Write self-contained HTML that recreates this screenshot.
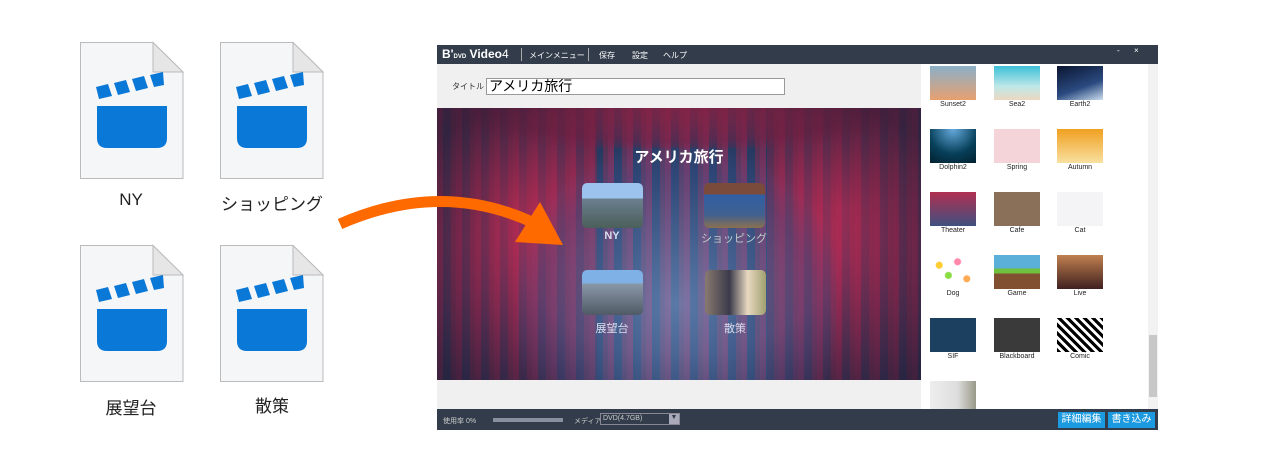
<!DOCTYPE html>
<html><head><meta charset="utf-8"><style>
*{margin:0;padding:0;box-sizing:border-box}
body{width:1274px;height:466px;background:#fff;position:relative;overflow:hidden;font-family:"Liberation Sans","Noto Sans CJK JP",sans-serif}
.abs{position:absolute}
.flabel{position:absolute;font-size:17px;color:#222;text-align:center;width:140px}
.thumb{position:absolute;width:46px;height:34px}
.tl{position:absolute;width:60px;text-align:center;font-size:7px;color:#222}
.st{position:absolute;width:61px;height:45px;border-radius:5px}
.sl{position:absolute;width:100px;text-align:center;font-size:11px;color:#dde}
</style></head><body>

<svg class="abs" style="left:0;top:0" width="340" height="466">
<defs><g id="f">
<path d="M0.5 0.5 H73 L103 30 V136.5 H0.5 Z" fill="#f5f6f8" stroke="#bbb"/>
<path d="M73 0.5 V30 H103 Z" fill="#e6e6e6" stroke="#bbb"/>
<path d="M17 64 H87 V96 Q87 106 77 106 H27 Q17 106 17 96 Z" fill="#0a78d7"/>
<path d="M16 45 L28 42 L32 54 L19 57 Z M34 41 L46 38 L50 50 L38 53 Z M52 37 L64 34 L68 46 L56 49 Z M70 33 L83 30 L84 43 L74 45 Z" fill="#0a78d7"/>
</g></defs>
<use href="#f" x="80" y="42"/><use href="#f" x="220" y="42"/>
<use href="#f" x="80" y="245"/><use href="#f" x="220" y="245"/>
</svg>
<div class="flabel" style="left:61px;top:190px">NY</div>
<div class="flabel" style="left:202px;top:190px">ショッピング</div>
<div class="flabel" style="left:61px;top:394px">展望台</div>
<div class="flabel" style="left:202px;top:392px">散策</div>

<div class="abs" style="left:437px;top:45px;width:721px;height:385px;background:#f0f0f0"></div>
<div class="abs" style="left:437px;top:45px;width:721px;height:19px;background:#323c4a;color:#fff;font-size:8px">
 <span class="abs" style="left:5px;top:2px;font-size:12px;font-weight:bold">B'<span style="font-size:6px">DVD</span> Video<span style="font-weight:normal">4</span></span>
 <span class="abs" style="left:84px;top:3px;width:1px;height:13px;background:#aaa"></span>
 <span class="abs" style="left:92px;top:5px">メインメニュー</span>
 <span class="abs" style="left:151px;top:3px;width:1px;height:13px;background:#aaa"></span>
 <span class="abs" style="left:162px;top:5px">保存</span>
 <span class="abs" style="left:195px;top:5px">設定</span>
 <span class="abs" style="left:226px;top:5px">ヘルプ</span>
 <span class="abs" style="left:680px;top:1px">-</span>
 <span class="abs" style="left:697px;top:1px">×</span>
</div>
<div class="abs" style="left:452px;top:81px;font-size:8px;color:#333">タイトル</div>
<div class="abs" style="left:486px;top:78px;width:299px;height:17px;background:#fff;border:1px solid #999;font-size:14px;line-height:15px;padding-left:2px;color:#000">アメリカ旅行</div>

<div class="abs" style="left:437px;top:108px;width:484px;height:272px;overflow:hidden;background:#2a3f66">
 <div class="abs" style="left:0;top:0;width:484px;height:272px;background:repeating-linear-gradient(90deg,rgba(200,40,90,.5) 0 6px,rgba(40,60,110,.3) 6px 14px,rgba(180,40,80,.4) 14px 19px)"></div>
 <div class="abs" style="left:-40px;top:-30px;width:200px;height:330px;background:radial-gradient(ellipse at 60% 40%,rgba(210,40,80,.7),rgba(120,20,50,.3) 70%,transparent)"></div>
 <div class="abs" style="left:330px;top:-30px;width:200px;height:330px;background:radial-gradient(ellipse at 40% 40%,rgba(210,40,80,.7),rgba(120,20,50,.3) 70%,transparent)"></div>
 <div class="abs" style="left:0;top:-20px;width:484px;height:60px;background:radial-gradient(ellipse at 50% 20%,rgba(200,40,80,.9),rgba(150,30,70,.5) 60%,transparent 80%)"></div>
 <div class="abs" style="left:0;top:0;width:484px;height:272px;background:radial-gradient(ellipse at 50% 55%,transparent 45%,rgba(15,25,45,.55) 90%)"></div>
 <div class="abs" style="left:80px;top:40px;width:320px;height:260px;background:radial-gradient(ellipse at 50% 60%,rgba(130,170,220,.55),rgba(60,90,150,.3) 60%,transparent 75%)"></div>
 <div class="abs" style="left:0;top:38px;width:484px;text-align:center;font-size:15px;font-weight:bold;color:#fff">アメリカ旅行</div>
 <div class="st" style="left:145px;top:75px;background:linear-gradient(#9cc3ee 0 35%,#6b7f8f 35%,#4b5f5a)"></div>
 <div class="st" style="left:267px;top:75px;background:linear-gradient(#7a4a3a 0 25%,#2f5fa5 25%,#406090 70%,#8a7050)"></div>
 <div class="st" style="left:145px;top:162px;background:linear-gradient(#7fb0e6 0 30%,#8a98a8 30%,#505a66)"></div>
 <div class="st" style="left:268px;top:162px;background:linear-gradient(90deg,#8a7a70,#3a3a4a 40%,#e8d8c0 70%,#a0a070)"></div>
 <div class="sl" style="left:125px;top:122px;font-weight:bold">NY</div>
 <div class="sl" style="left:247px;top:122px;color:#bcc">ショッピング</div>
 <div class="sl" style="left:125px;top:212px">展望台</div>
 <div class="sl" style="left:248px;top:212px">散策</div>
</div>

<div class="abs" style="left:921px;top:64px;width:237px;height:345px;background:#fff"></div>
<div class="abs" style="left:1148px;top:64px;width:10px;height:345px;background:#f2f2f2"></div>
<div class="abs" style="left:1149px;top:335px;width:8px;height:62px;background:#c8c8c8"></div>
<div class="thumb" style="left:930px;top:66px;background:linear-gradient(#8ab0c8,#e8a070)"></div>
<div class="thumb" style="left:994px;top:66px;background:linear-gradient(#3cc0d8,#bfe8e8 60%,#ecd8c0)"></div>
<div class="thumb" style="left:1057px;top:66px;background:linear-gradient(160deg,#0a1530,#2a4a80 60%,#cde)"></div>
<div class="thumb" style="left:930px;top:129px;background:radial-gradient(circle at 50% 0,#6ad,#07405a 60%,#02202e)"></div>
<div class="thumb" style="left:994px;top:129px;background:#f4d4d8"></div>
<div class="thumb" style="left:1057px;top:129px;background:linear-gradient(#f0a020,#f8e0a0)"></div>
<div class="thumb" style="left:930px;top:192px;background:linear-gradient(#b03050,#405080)"></div>
<div class="thumb" style="left:994px;top:192px;background:#8a7058"></div>
<div class="thumb" style="left:1057px;top:192px;background:#f4f4f6"></div>
<div class="thumb" style="left:930px;top:255px;background:radial-gradient(circle at 20% 30%,#fc3 0 3px,transparent 4px),radial-gradient(circle at 60% 20%,#f8a 0 3px,transparent 4px),radial-gradient(circle at 40% 60%,#8d4 0 3px,transparent 4px),radial-gradient(circle at 80% 70%,#fa5 0 3px,transparent 4px),#fff"></div>
<div class="thumb" style="left:994px;top:255px;background:linear-gradient(#5ab0d8 0 40%,#70c040 40% 55%,#805030 55%)"></div>
<div class="thumb" style="left:1057px;top:255px;background:linear-gradient(#c08050,#402020)"></div>
<div class="thumb" style="left:930px;top:318px;background:#1c4060"></div>
<div class="thumb" style="left:994px;top:318px;background:#3a3a3a"></div>
<div class="thumb" style="left:1057px;top:318px;background:repeating-linear-gradient(45deg,#000 0 3px,#fff 3px 6px)"></div>
<div class="thumb" style="left:930px;top:381px;height:28px;background:linear-gradient(90deg,#eee,#ddd 60%,#998)"></div>
<div class="tl" style="left:923px;top:101px">Sunset2</div><div class="tl" style="left:987px;top:101px">Sea2</div><div class="tl" style="left:1050px;top:101px">Earth2</div>
<div class="tl" style="left:923px;top:164px">Dolphin2</div><div class="tl" style="left:987px;top:164px">Spring</div><div class="tl" style="left:1050px;top:164px">Autumn</div>
<div class="tl" style="left:923px;top:227px">Theater</div><div class="tl" style="left:987px;top:227px">Cafe</div><div class="tl" style="left:1050px;top:227px">Cat</div>
<div class="tl" style="left:923px;top:290px">Dog</div><div class="tl" style="left:987px;top:290px">Game</div><div class="tl" style="left:1050px;top:290px">Live</div>
<div class="tl" style="left:923px;top:353px">SIF</div><div class="tl" style="left:987px;top:353px">Blackboard</div><div class="tl" style="left:1050px;top:353px">Comic</div>

<div class="abs" style="left:437px;top:409px;width:721px;height:21px;background:#323c4a;color:#ccc;font-size:7px">
 <span class="abs" style="left:6px;top:7px">使用率 0%</span>
 <span class="abs" style="left:56px;top:9px;width:70px;height:4px;background:#8890a0"></span>
 <span class="abs" style="left:137px;top:7px">メディア</span>
 <span class="abs" style="left:163px;top:4px;width:80px;height:12px;border:1px solid #889;font-size:7px;padding:1px 2px">DVD(4.7GB)</span>
 <span class="abs" style="left:232px;top:5px;width:10px;height:10px;background:#aab;color:#323c4a;font-size:7px;text-align:center">▼</span>
 <span class="abs" style="left:621px;top:3px;width:47px;height:16px;background:#1c9ae0;color:#fff;font-size:10px;text-align:center;line-height:16px">詳細編集</span>
 <span class="abs" style="left:671px;top:3px;width:47px;height:16px;background:#1c9ae0;color:#fff;font-size:10px;text-align:center;line-height:16px">書き込み</span>
</div>

<svg class="abs" style="left:0;top:0" width="1274" height="466">
<path d="M340 224 Q440 180 532 222" fill="none" stroke="#ff6a00" stroke-width="11"/>
<polygon points="515,242 540,202 563,245" fill="#ff6a00"/>
</svg>
</body></html>
